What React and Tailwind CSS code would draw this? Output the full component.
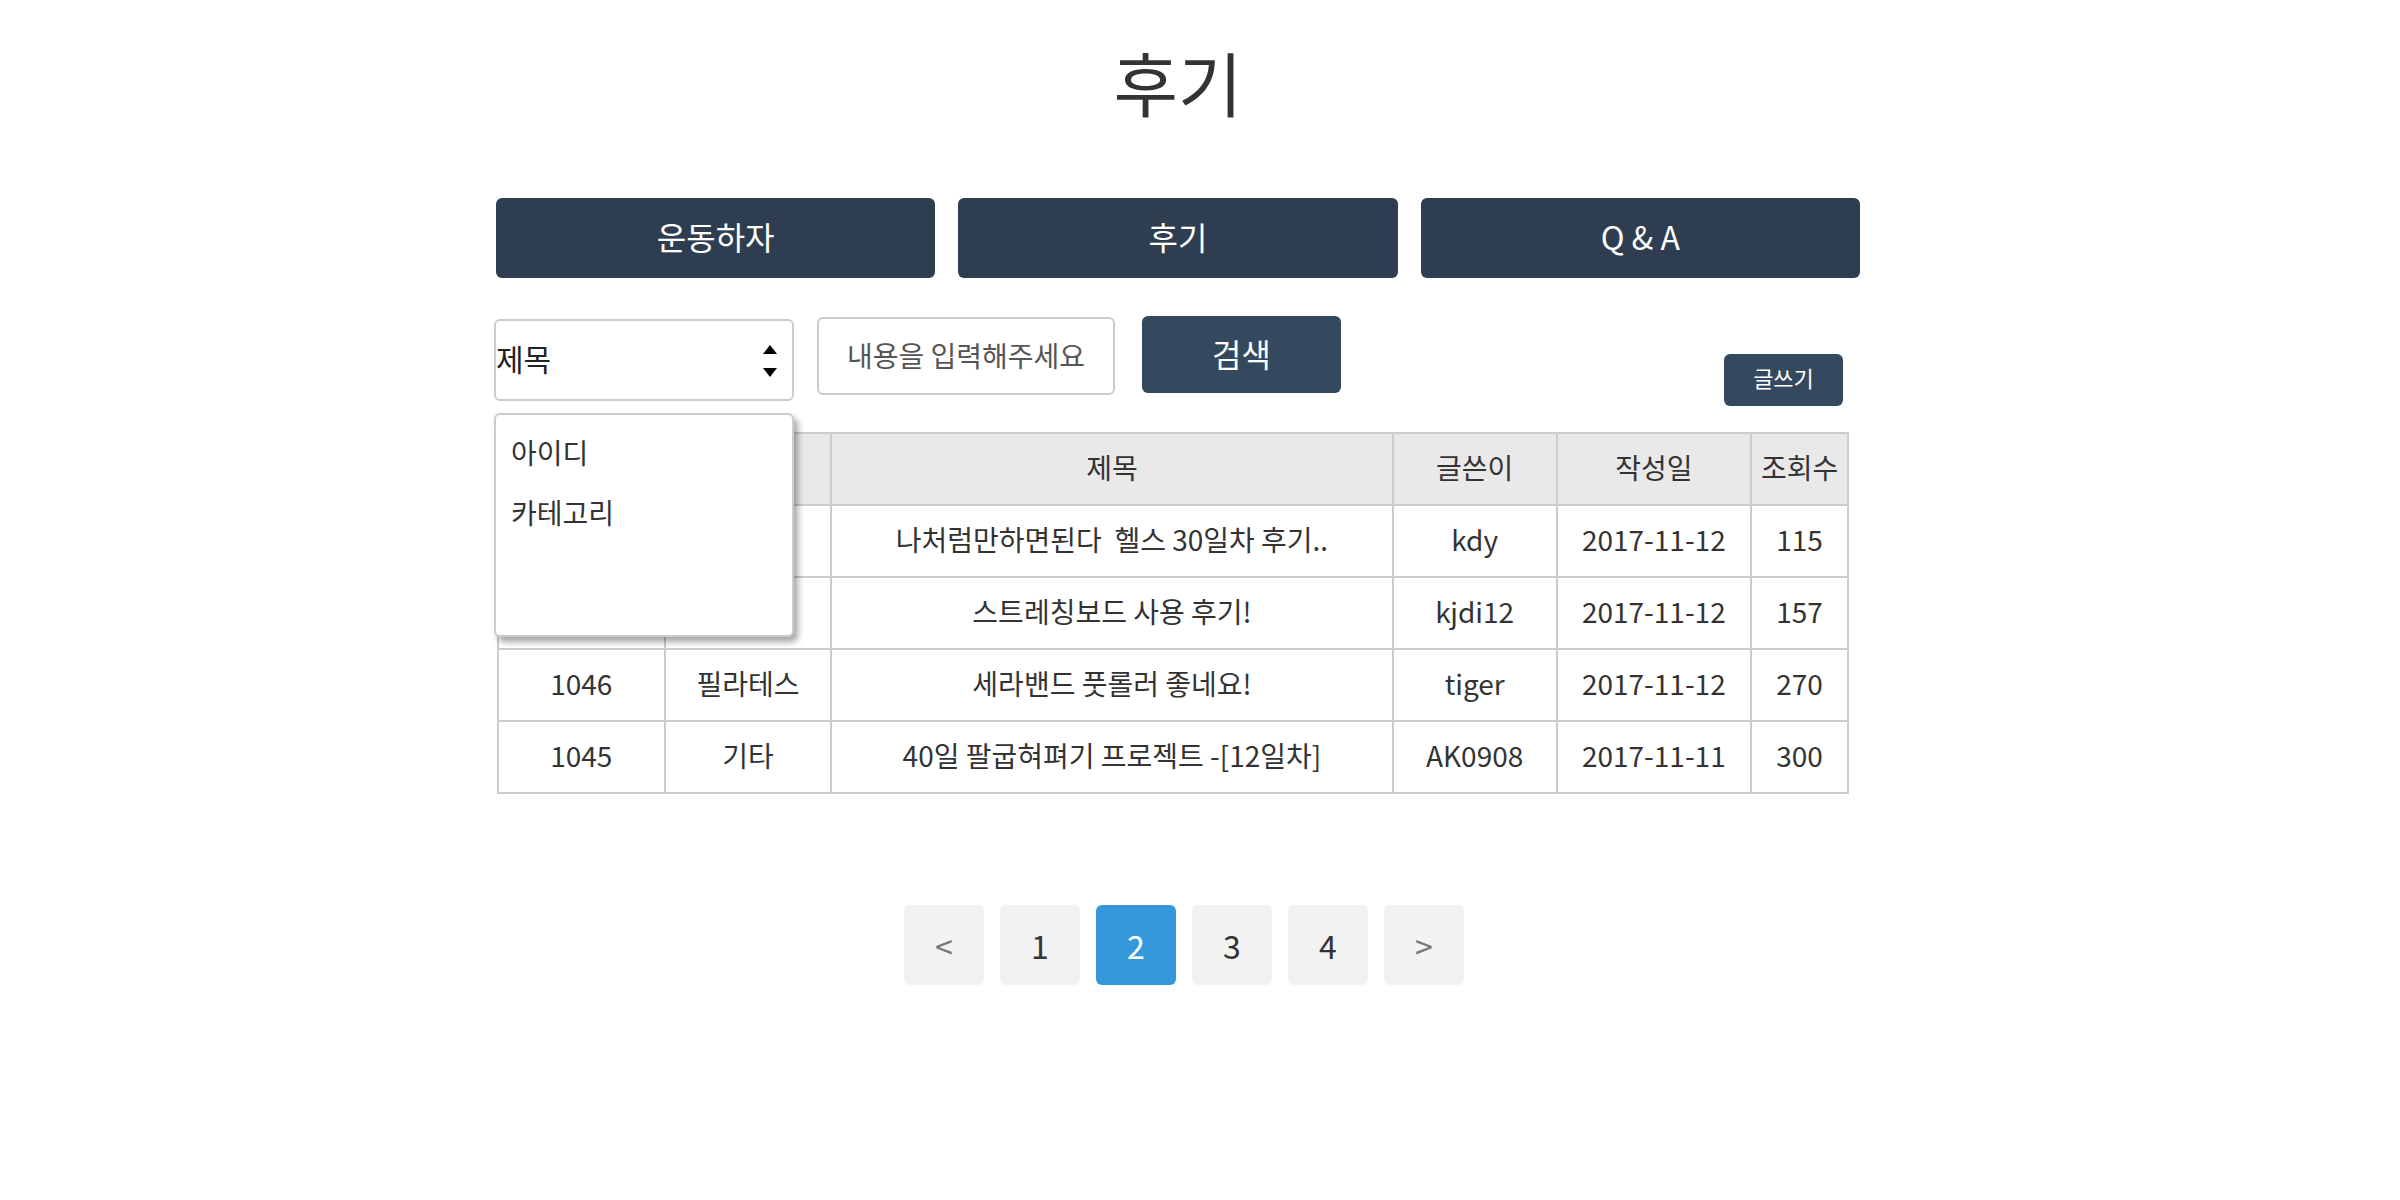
import { useState } from 'react'

// 앞의 두 줄 번호/분류 칸은 드롭다운에 가려져 있음
const posts = [
  { id: '', category: '', title: '나처럼만하면된다  헬스 30일차 후기..', writer: 'kdy', date: '2017-11-12', views: 115 },
  { id: '', category: '', title: '스트레칭보드 사용 후기!', writer: 'kjdi12', date: '2017-11-12', views: 157 },
  { id: 1046, category: '필라테스', title: '세라밴드 풋롤러 좋네요!', writer: 'tiger', date: '2017-11-12', views: 270 },
  { id: 1045, category: '기타', title: '40일 팔굽혀펴기 프로젝트 -[12일차]', writer: 'AK0908', date: '2017-11-11', views: 300 },
]

const pages = ['<', '1', '2', '3', '4', '>']

function App() {
  const [page] = useState('2')

  return (
    <div className="min-h-screen bg-white text-[#333] font-['Noto_Sans_CJK_KR',sans-serif]">
      <div className="ml-[496px] w-[1364px]">
        <h1 className="pt-[46px] text-center text-[70px] leading-[72px] font-normal">후기</h1>

        {/* 상단 메뉴 */}
        <div className="mt-[80px] flex gap-[23px]">
          {['운동하자', '후기', 'Q & A'].map((menu) => (
            <button
              key={menu}
              className="w-[440px] h-[80px] pb-[4px] rounded-[6px] bg-[#2e3e50] text-white text-[32px]"
            >
              {menu}
            </button>
          ))}
        </div>

        {/* 검색 */}
        <div className="mt-[38px] flex items-start">
          <div className="relative mt-[3px] -ml-[2px]">
            <div className="w-[300px] h-[82px] rounded-[6px] border-2 border-[#ccc] flex items-center justify-between pr-[14px]">
              <span className="pb-[4px] text-[30px] text-[#222]">제목</span>
              <svg width="16" height="34" viewBox="0 0 16 34" className="mt-[2px]">
                <path d="M8 1 L15 10 L1 10 Z" fill="#000" />
                <path d="M1 24 L15 24 L8 33 Z" fill="#000" />
              </svg>
            </div>
            <div className="absolute z-10 left-0 top-[94px] w-[300px] h-[224px] bg-white rounded-[6px] border-2 border-[#ccc] shadow-[4px_5px_6px_rgba(0,0,0,0.35)] pt-[16px] px-[15px] text-[28px] text-[#333]">
              <div className="h-[60px]">아이디</div>
              <div className="h-[60px]">카테고리</div>
            </div>
          </div>
          <div className="ml-[23px] mt-[1px] w-[298px] h-[78px] pb-[3px] rounded-[6px] border-2 border-[#ccc] flex items-center justify-center">
            <span className="text-[28px] text-[#555]">내용을 입력해주세요</span>
          </div>
          <button className="ml-[27px] w-[199px] h-[77px] pb-[4px] rounded-[6px] bg-[#34495e] text-white text-[32px]">
            검색
          </button>
          <button className="ml-auto mr-[17px] mt-[38px] w-[119px] h-[52px] pb-[6px] rounded-[6px] bg-[#34495e] text-white text-[22px]">
            글쓰기
          </button>
        </div>

        {/* 게시판 */}
        <table className="mt-[26px] ml-[1px] w-[1352px] border-collapse text-[28px] text-center">
          <thead>
            <tr className="h-[72px] bg-[#e9e9e9]">
              <th className="w-[167px] pb-[4px] border-2 border-[#ccc] font-normal"></th>
              <th className="w-[167px] pb-[4px] border-2 border-[#ccc] font-normal"></th>
              <th className="w-[562px] pb-[4px] border-2 border-[#ccc] font-normal">제목</th>
              <th className="w-[164px] pb-[4px] border-2 border-[#ccc] font-normal">글쓴이</th>
              <th className="w-[195px] pb-[4px] border-2 border-[#ccc] font-normal">작성일</th>
              <th className="w-[97px] pb-[4px] border-2 border-[#ccc] font-normal">조회수</th>
            </tr>
          </thead>
          <tbody>
            {posts.map((post, i) => (
              <tr key={i} className="h-[72px]">
                <td className="pb-[4px] border-2 border-[#ccc]">{post.id}</td>
                <td className="pb-[4px] border-2 border-[#ccc]">{post.category}</td>
                <td className="pb-[4px] border-2 border-[#ccc] whitespace-pre">{post.title}</td>
                <td className="pb-[4px] border-2 border-[#ccc]">{post.writer}</td>
                <td className="pb-[4px] border-2 border-[#ccc]">{post.date}</td>
                <td className="pb-[4px] border-2 border-[#ccc]">{post.views}</td>
              </tr>
            ))}
          </tbody>
        </table>

        {/* 페이지 */}
        <div className="mt-[111px] pl-[12px] flex justify-center gap-[16px]">
          {pages.map((p) => (
            <button
              key={p}
              className={`w-[80px] h-[80px] rounded-[6px] text-[32px] ${
                p === page
                  ? 'bg-[#3498db] text-white'
                  : p === '<' || p === '>'
                    ? 'bg-[#f2f2f2] text-[#777]'
                    : 'bg-[#f2f2f2] text-[#333]'
              }`}
            >
              {p}
            </button>
          ))}
        </div>
      </div>
    </div>
  )
}

export default App
